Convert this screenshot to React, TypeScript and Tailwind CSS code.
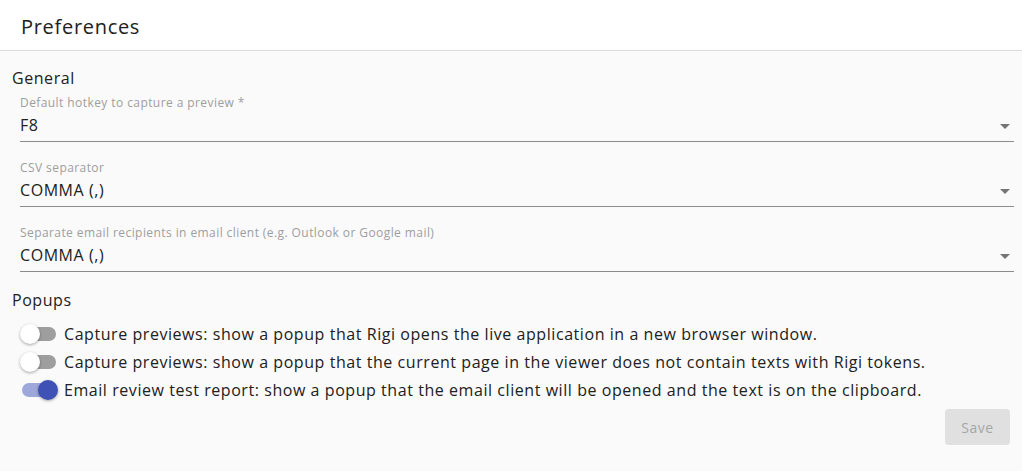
import { useState } from 'react'

const font = { fontFamily: '"Open Sans", "Liberation Sans", sans-serif' }

function SelectField({ label, value }: { label: string; value: string }) {
  return (
    <div className="ml-5 mr-2 flex flex-col">
      <span className="text-[12px] leading-[16px] tracking-[0.035em] text-[#9e9e9e]">{label}</span>
      <div className="flex items-center justify-between border-b border-[#8c8c8c] pt-[4px] pb-[6px]">
        <span className="text-[16px] leading-[20px] tracking-[0.035em] text-[#212121]">{value}</span>
        <svg width="10" height="5" viewBox="0 0 10 5" className="mr-[4px] mt-[2px]">
          <path d="M0 0h10L5 5z" fill="#757575" />
        </svg>
      </div>
    </div>
  )
}

function Toggle({ on, onClick }: { on: boolean; onClick: () => void }) {
  return (
    <button onClick={onClick} className="relative h-[20px] w-[38px] shrink-0">
      <span className={`absolute left-[2px] top-[3px] h-[14px] w-[34px] rounded-full ${on ? 'bg-[#9fa8da]' : 'bg-[#9e9e9e]'}`} />
      <span
        className={`absolute top-0 h-[20px] w-[20px] rounded-full shadow-[0_1px_3px_rgba(0,0,0,0.35)] ${on ? 'left-[18px] bg-[#3f51b5]' : 'left-0 bg-white'}`}
      />
    </button>
  )
}

export default function App() {
  const [toggles, setToggles] = useState([false, false, true])
  const popups = [
    'Capture previews: show a popup that Rigi opens the live application in a new browser window.',
    'Capture previews: show a popup that the current page in the viewer does not contain texts with Rigi tokens.',
    'Email review test report: show a popup that the email client will be opened and the text is on the clipboard.',
  ]

  return (
    <div style={font} className="flex h-[471px] w-[1022px] flex-col bg-[#fafafa]">
      {/* Header */}
      <div className="flex h-[51px] shrink-0 items-center border-b border-[#dcdcdc] bg-white pl-[21px] pt-[3px]">
        <h1 className="text-[20px] tracking-[0.035em] text-[#212121]">Preferences</h1>
      </div>

      {/* General */}
      <div className="flex flex-col pt-[17px]">
        <h2 className="ml-3 text-[16px] leading-[20px] tracking-[0.035em] text-[#212121]">General</h2>
        <div className="mt-[7px] flex flex-col gap-[18px]">
          <SelectField label="Default hotkey to capture a preview *" value="F8" />
          <SelectField label="CSV separator" value="COMMA (,)" />
          <SelectField label="Separate email recipients in email client (e.g. Outlook or Google mail)" value="COMMA (,)" />
        </div>

        {/* Popups */}
        <h2 className="ml-3 mt-[18px] text-[16px] leading-[20px] tracking-[0.035em] text-[#212121]">Popups</h2>
        <div className="mt-[14px] flex flex-col gap-[8px] pl-[20px]">
          {popups.map((text, i) => (
            <div key={i} className="flex items-center gap-[6px]">
              <Toggle on={toggles[i]} onClick={() => setToggles(t => t.map((v, j) => (j === i ? !v : v)))} />
              <span className="text-[16px] leading-[20px] tracking-[0.035em] text-[#212121]">{text}</span>
            </div>
          ))}
        </div>

        <div className="mr-3 mt-[9px] flex justify-end">
          <button className="h-[36px] w-[65px] rounded-[4px] bg-[#e0e0e0] text-[14px] tracking-[0.035em] text-[#a6a6a6]">Save</button>
        </div>
      </div>
    </div>
  )
}
